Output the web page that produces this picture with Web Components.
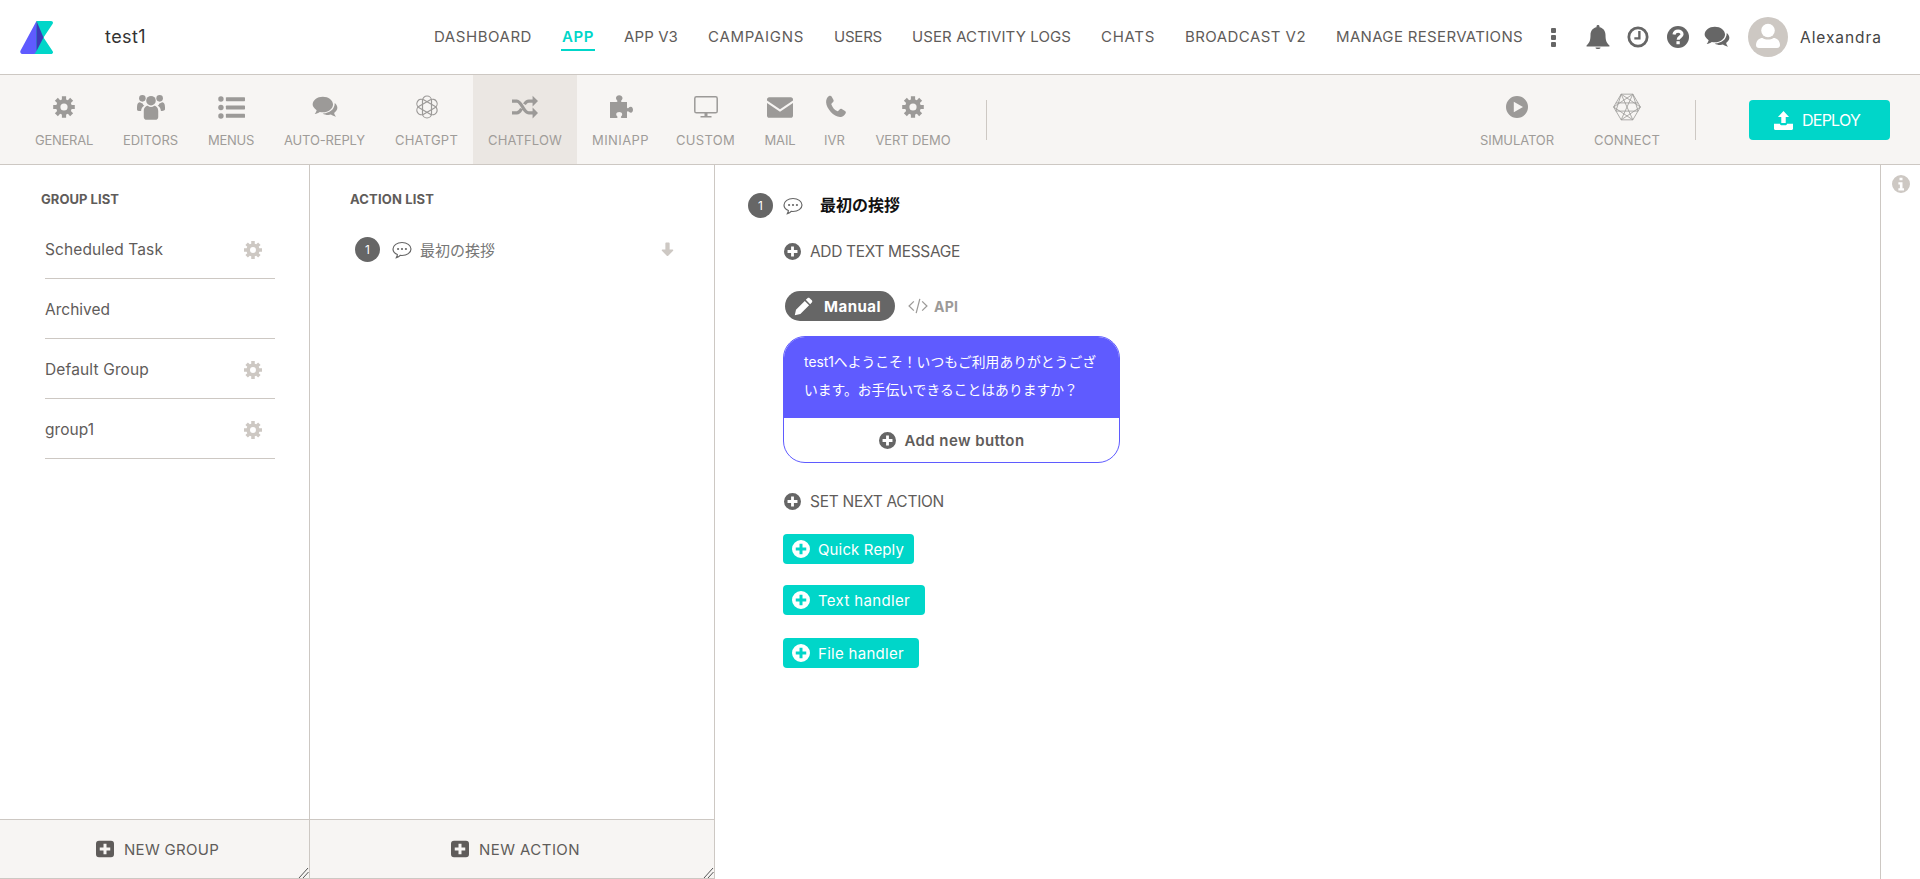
<!DOCTYPE html>
<html><head><meta charset="utf-8"><style>
html,body{margin:0;padding:0;background:#fff;height:879px;overflow:hidden}
body{font-family:Inter,"Noto Sans CJK JP",sans-serif;color:#5f5c5a}
</style></head><body>
<app-shell>
  <app-header>
    <top-link w="98">DASHBOARD</top-link><top-link w="32" active>APP</top-link><top-link w="54">APP V3</top-link><top-link w="96">CAMPAIGNS</top-link><top-link w="48">USERS</top-link><top-link w="159">USER ACTIVITY LOGS</top-link><top-link w="54">CHATS</top-link><top-link w="121">BROADCAST V2</top-link><top-link w="187">MANAGE RESERVATIONS</top-link>
  </app-header>
  <app-toolbar>
    <tool-item w="88" lw="58" icon="gear" label="GENERAL"></tool-item>
    <tool-item w="85" lw="55" icon="users" label="EDITORS"></tool-item>
    <tool-item w="76" lw="46" icon="list" label="MENUS"></tool-item>
    <tool-item w="111" lw="81" icon="comments" label="AUTO-REPLY"></tool-item>
    <tool-item w="93" lw="63" icon="gpt" label="CHATGPT"></tool-item>
    <tool-item w="104" lw="74" icon="shuffle" label="CHATFLOW" active></tool-item>
    <tool-item w="87" lw="57" icon="puzzle" label="MINIAPP"></tool-item>
    <tool-item w="83" lw="59" icon="desktop" label="CUSTOM"></tool-item>
    <tool-item w="66" lw="31" icon="mail" label="MAIL"></tool-item>
    <tool-item w="43" lw="21" icon="phone" label="IVR"></tool-item>
    <tool-item w="114" lw="75" icon="gear" label="VERT DEMO"></tool-item>
    <v-sep slot="mid"></v-sep>
    <tool-item slot="right" w="104" lw="74" icon="play" label="SIMULATOR" style="margin-right:10px"></tool-item>
    <tool-item slot="right" w="96" lw="66" icon="hex" label="CONNECT"></tool-item>
    <v-sep slot="right" style="margin:25px 53px 0 20px"></v-sep>
    <deploy-button slot="right">DEPLOY</deploy-button>
  </app-toolbar>
  <side-panel slot="panels" w="310" title="GROUP LIST" tw="78" foot="NEW GROUP" fw="95" pad="41" ftgap="96">
    <group-row w="118" gear>Scheduled Task</group-row>
    <group-row w="65">Archived</group-row>
    <group-row w="104" gear>Default Group</group-row>
    <group-row w="49" gear>group1</group-row>
  </side-panel>
  <side-panel slot="panels" w="405" title="ACTION LIST" tw="84" foot="NEW ACTION" fw="101" pad="40" ftgap="141">
    <action-row>最初の挨拶</action-row>
  </side-panel>
  <flow-detail slot="panels"></flow-detail>
  <info-rail slot="panels"></info-rail>
</app-shell>
<script>
const fit=(el,w,len)=>{if(!el||!w)return;const t=len||el.textContent.length||1;el.style.display='inline-block';el.style.whiteSpace='nowrap';el.style.letterSpacing='0';const c=el.getBoundingClientRect().width;el.style.letterSpacing=((+w-c)/t).toFixed(3)+'px'};
const gearPath=(()=>{let d='';const n=8,c=12;for(let i=0;i<n;i++){const a=i*2*Math.PI/n-Math.PI/2,w=.27;
 const pts=[[a-w,7.900],[a-w*.72,11],[a+w*.72,11],[a+w,7.900]];
 pts.forEach((p,j)=>{const x=c+p[1]*Math.cos(p[0]),y=c+p[1]*Math.sin(p[0]);d+=(i==0&&j==0?'M':'L')+x.toFixed(2)+' '+y.toFixed(2)})}
 return d+'Z M12 8.400a3.600 3.600 0 1 0 0 7.200a3.600 3.600 0 1 0 0-7.200Z'})();
const chat=`<path d="M10 2.500c5.200 0 9.400 3.200 9.400 7.200s-4.200 7.200-9.400 7.200c-1 0-1.900-.1-2.800-.3-1.400 1-2.900 1.600-4.700 1.900.8-1 1.500-2.100 1.800-3.500C2 13.200.6 11.500.6 9.700.6 5.700 4.800 2.500 10 2.500z"/><path d="M21 8.400c1.500 1.200 2.400 2.700 2.400 4.400 0 1.900-1.200 3.600-3 4.700.3 1.300.9 2.400 1.800 3.500-1.800-.3-3.400-1-4.700-2-.8.200-1.700.3-2.500.3-2 0-3.800-.5-5.200-1.400 5.700.2 11.300-3.300 11.200-9.500z"/>`;
const I={
gear:`<path fill-rule="evenodd" d="${gearPath}"/>`,
users:`<circle cx="12" cy="6.600" r="4.100"/><circle cx="4.600" cy="4.600" r="2.800"/><circle cx="19.400" cy="4.600" r="2.800"/><path d="M5.800 15.500c0-3.400 2.200-4.600 3.400-4.600 1 .7 1.800 1 2.800 1s1.800-.3 2.800-1c1.200 0 3.400 1.200 3.400 4.600v5c0 1.500-1 2.500-2.500 2.500H8.300c-1.500 0-2.500-1-2.500-2.500z"/><path d="M0 12c0-2.800 1.300-4 2.500-4 .8.600 1.500.9 2.300.9.300.9.900 1.600 1.500 2.100-1.600.7-2.700 2.400-2.800 4.500H1.500C.5 15.500 0 14.800 0 14zM24 12c0-2.800-1.300-4-2.500-4-.8.600-1.500.9-2.300.9-.3.900-.9 1.600-1.500 2.100 1.600.7 2.700 2.400 2.800 4.500h1c1 0 2.500-.7 2.500-1.500z"/>`,
list:`<circle cx="2.600" cy="4.500" r="2.400"/><circle cx="2.600" cy="12" r="2.400"/><circle cx="2.600" cy="19.500" r="2.400"/><rect x="7" y="2.800" width="17" height="3.600" rx=".6"/><rect x="7" y="10.200" width="17" height="3.600" rx=".6"/><rect x="7" y="17.600" width="17" height="3.600" rx=".6"/>`,
comments:chat,
gpt:`<g fill="none" stroke="currentColor" stroke-width="1.200"><rect x="7.500" y="1" width="9" height="22" rx="4.500"/><rect x="7.500" y="1" width="9" height="22" rx="4.500" transform="rotate(60 12 12)"/><rect x="7.500" y="1" width="9" height="22" rx="4.500" transform="rotate(120 12 12)"/></g>`,
shuffle:`<path fill="none" stroke="currentColor" stroke-width="3" d="M0 6.500h4.500c4.500 0 6 11 11 11H20M0 17.500h4.500c2 0 3.200-1.800 4.300-3.800M11.500 9.500C12.500 7.800 13.600 6.500 15.500 6.500H20"/><path d="M19 1.500l5 5-5 5zM19 12.500l5 5-5 5z"/>`,
puzzle:`<path d="M1 7h6.500c1 0 1.200-.7.700-1.400C7.500 4.700 7 4 7 3c0-1.700 1.500-2.800 3.200-2.800S13.500 1.300 13.500 3c0 1-.5 1.700-1.200 2.600-.5.700-.3 1.400.7 1.400H18v5.300c0 1 .7 1.200 1.400.7.800-.7 1.500-1.200 2.400-1.200 1.500 0 2.200 1.500 2.200 3s-.7 3-2.200 3c-.9 0-1.600-.5-2.400-1.200-.7-.5-1.400-.3-1.400.7V23h-5.200c-1 0-1.200-.7-.7-1.400.7-.8 1.100-1.500 1.100-2.300 0-1.500-1.500-2.300-3-2.300s-3 .8-3 2.300c0 .8.400 1.500 1.100 2.300.5.700.3 1.400-.7 1.400H1z"/>`,
desktop:`<g fill="none" stroke="currentColor" stroke-width="1.500"><rect x=".8" y="1.800" width="22.400" height="16" rx="1.600"/></g><path d="M10.500 18h3v3h-3zM6.500 21h11v1.400h-11z"/>`,
mail:`<path d="M2 3h20c1.100 0 2 .9 2 2v.9L12 14 0 5.900V5c0-1.100.9-2 2-2z"/><path d="M0 8.200 12 16.400 24 8.200V20c0 1.100-.9 2-2 2H2c-1.100 0-2-.9-2-2z"/>`,
phone:`<path d="M6 1c1-.6 2-.5 2.600.5l1.800 3.300c.4.800.3 1.500-.3 2.100L8.600 8.500c-.3.300-.3.700-.2 1 1.100 3 3 5.200 5.700 6.600.4.200.8.100 1-.2l1.500-1.500c.6-.6 1.500-.7 2.200-.3l3.200 1.900c1 .6 1.100 1.700.5 2.600-1 1.600-2.400 3-4.400 3.300C11.600 23 3.400 13.800 3.100 7.300 3 4.400 4.200 2.300 6 1z"/>`,
play:`<path fill-rule="evenodd" d="M12 1a11 11 0 1 0 0 22a11 11 0 1 0 0-22ZM8.800 6.800 18 12 8.800 17.200Z"/>`,
hex:`<g fill="none" stroke="currentColor" stroke-width=".7"><path d="M7 1h10l6.500 11L17 23H7L.5 12z"/><path d="M7 1 23.500 12M17 1 .5 12M.5 12 17 23M23.500 12 7 23M7 1l10 22M17 1 7 23M2.500 8.500h19M2.500 15.500h19M7 1 2.500 15.500M17 1l4.500 14.500"/></g>`,
upload:`<path d="M12 0l7 7.500h-4.200V15H9.200V7.500H5z"/><path d="M0 16h7.500c.3 1.200 1.300 2 2.500 2h4c1.200 0 2.200-.8 2.500-2H24v6.500c0 .8-.7 1.500-1.500 1.500h-21C.7 24 0 23.300 0 22.500z"/>`,
bell:`<path d="M12 0c.9 0 1.500.6 1.500 1.400v.9c3.700.7 6 3.700 6 7.700 0 6 1.200 7.900 3.900 10.500.3.300.2 1-.4 1H1c-.6 0-.7-.7-.4-1C3.300 17.900 4.500 16 4.500 10c0-4 2.300-7 6-7.700v-.9C10.500.6 11.100 0 12 0z"/><path d="M9.500 22.400h5c0 1-1.200 1.600-2.500 1.600s-2.500-.6-2.500-1.600z"/>`,
clock:`<circle cx="12" cy="12" r="10" fill="none" stroke="currentColor" stroke-width="3"/><path fill="none" stroke="currentColor" stroke-width="2.600" d="M13.500 5.500V13.500H8"/>`,
question:`<circle cx="12" cy="12" r="12"/><path fill="none" stroke="#fff" stroke-width="3.400" d="M7.600 9.300c.4-2.400 2.200-3.700 4.500-3.700 2.400 0 4.300 1.400 4.300 3.400 0 3-4.200 2.800-4.200 6"/><rect x="10.300" y="16.600" width="3.600" height="3.300" fill="#fff"/>`,
chatdark:chat,
plusc:`<path fill-rule="evenodd" d="M12 0a12 12 0 1 0 0 24a12 12 0 1 0 0-24ZM10 5h4v5h5v4h-5v5h-4v-5H5v-4h5Z"/>`,
pluss:`<path fill-rule="evenodd" d="M4 1h16a4 4 0 0 1 4 4v14a4 4 0 0 1-4 4H4a4 4 0 0 1-4-4V5a4 4 0 0 1 4-4ZM10 5v5H5v4h5v5h4v-5h5v-4h-5V5Z"/>`,
info:`<path fill-rule="evenodd" d="M12 0a12 12 0 1 0 0 24a12 12 0 1 0 0-24ZM10 3.500h4v3.500h-4ZM8.500 9.500H14v8h2v3H8.500v-3h2v-5h-2Z"/>`,
down:`<path d="M10 2h4c.6 0 1 .4 1 1v9h4.200c.9 0 1.300 1 .7 1.700L12.700 21c-.4.400-1 .4-1.400 0L4.100 13.700c-.6-.7-.2-1.700.7-1.700H9V3c0-.6.4-1 1-1z"/>`,
bubble:`<g fill="none" stroke="currentColor" stroke-width="1.400"><path d="M12 3c5.900 0 10.800 3.400 10.800 7.800S17.900 18.600 12 18.600c-.8 0-1.500-.1-2.200-.2-1.100 1.400-2.700 2.300-4.500 2.800.7-1.200 1.100-2.300 1.100-3.700C3.300 16.100 1.200 13.600 1.200 10.800 1.200 6.400 6.100 3 12 3z"/></g><circle cx="7.300" cy="10.800" r="1.300"/><circle cx="12" cy="10.800" r="1.300"/><circle cx="16.700" cy="10.800" r="1.300"/>`,
pencil:`<path d="M17 1.500c.8-.8 2-.8 2.800 0l2.700 2.700c.8.800.8 2 0 2.800l-2.100 2.100-5.500-5.500zM13.600 4.900l5.500 5.500L8 21.500l-7 1.500 1.500-7z"/>`,
code:`<path fill="none" stroke="currentColor" stroke-width="1.500" d="M7 6.500 1.300 12 7 17.500M17 6.500 22.700 12 17 17.500M14.200 3.500 9.800 20.500"/>`
};
const def=(n,fn)=>customElements.define(n,class extends HTMLElement{constructor(){super();this.attachShadow({mode:'open'})}connectedCallback(){if(!this.done){this.done=1;fn.call(this,this.shadowRoot)}}});
const svg=(n,s,st='')=>`<svg viewBox="0 0 24 24" width="${s}" height="${s}" fill="currentColor" style="display:block;flex:none;${st}">${I[n]}</svg>`;

def('app-shell',function(r){r.innerHTML=`<style>:host{display:flex;flex-direction:column;height:879px;width:1920px}
.main{display:flex;flex:1;min-height:0}</style><slot></slot><div class="main"><slot name="panels"></slot></div>`});

def('app-header',function(r){r.innerHTML=`<style>:host{display:flex;align-items:center;height:74px;border-bottom:1px solid #cdc8c3;flex:none;background:#fff;color:#5f5c5a}
.logo{margin-left:20px;flex:none}
.name{margin-left:52px;font-size:18px;line-height:22px;color:#333;width:41px;flex:none}
nav{display:flex;gap:30px;margin-left:288px;align-items:center;flex:none}
.ic{display:flex;align-items:center;color:#666;flex:none}
.who{font-size:15.500px;color:#444;margin-left:12px;flex:none}
.av{width:40px;height:40px;border-radius:50%;background:#cdc8c3;overflow:hidden;flex:none;margin-left:18px}
</style>
<svg class="logo" width="33" height="33" viewBox="0 0 33 33"><path d="M16.500 0h14.500c1.600 0 2.400 1.500 1.700 2.700L23.500 16.500 32.700 30.300c.8 1.200 0 2.700-1.700 2.700H14z" fill="#00d6c9"/><path d="M16.500 0 .6 29.500C-.4 31.300 1 33 3 33h11.500L16.500 30z" fill="#5f5bff"/><path d="M16.500 0 23.500 16.500 16.500 30z" fill="#3f38b8"/></svg>
<div class="name"><span id="n">test1</span></div><nav><slot></slot></nav>
<div class="ic" style="margin-left:26px;width:8px;flex-direction:column;gap:2px">${[0,1,2].map(()=>'<span style="width:5px;height:5px;background:#666;border-radius:1px;display:block"></span>').join('')}</div>
<div class="ic" style="margin-left:29px">${svg('bell',24)}</div>
<div class="ic" style="margin-left:17px">${svg('clock',22)}</div>
<div class="ic" style="margin-left:18px">${svg('question',22)}</div>
<div class="ic" style="margin-left:15px">${svg('chatdark',26)}</div>
<div class="av"><svg viewBox="0 0 40 40" width="40" height="40" fill="#fff" style="display:block"><circle cx="20" cy="13.500" r="6.800"/><path d="M8 28c0-4.500 3.500-7 6.500-7 1.500 1 3.500 1.500 5.500 1.500s4-.5 5.500-1.500c3 0 6.500 2.500 6.500 7 0 1.800-1.200 3-3 3H11c-1.800 0-3-1.200-3-3z"/></svg></div>
<div class="who"><span id="w">Alexandra</span></div>`;fit(r.getElementById('n'),41);fit(r.getElementById('w'),82)});

def('top-link',function(r){const a=this.hasAttribute('active');r.innerHTML=`<style>:host{display:block;flex:none;position:relative;width:${this.getAttribute('w')}px;white-space:nowrap;font-size:15px;line-height:20px;color:${a?'#00d6c9':'#5f5c5a'};font-weight:${a?600:400}}
${a?'i{position:absolute;left:-1px;right:-1px;top:22px;height:2px;background:#00d6c9;display:block}':''}</style><span id="t"><slot></slot></span>${a?'<i></i>':''}`;
 fit(r.getElementById('t'),this.getAttribute('w'),this.textContent.length)});

def('app-toolbar',function(r){r.innerHTML=`<style>:host{display:flex;height:89px;border-bottom:1px solid #cdc8c3;background:#f7f5f3;padding-left:20px;flex:none;align-items:stretch}
.r{display:flex;margin-left:auto;padding-right:30px;align-items:stretch}</style><slot></slot><slot name="mid"></slot><div class="r"><slot name="right"></slot></div>`});

def('tool-item',function(r){const a=this.hasAttribute('active'),ic=this.getAttribute('icon');
 const size={desktop:24,users:28,hex:28,gpt:24,mail:26,shuffle:26,puzzle:24,list:27,comments:26}[ic]||24;
 r.innerHTML=`<style>:host{display:flex;flex-direction:column;align-items:center;flex:none;width:${this.getAttribute('w')}px;background:${a?'#ebe7e3':'transparent'};color:#9c9a98}
.i{height:26px;margin-top:19px;display:flex;align-items:center;justify-content:center}
.l{margin-top:11px;font-size:13px;line-height:18px;white-space:nowrap;color:#9f9c99}</style>
<div class="i">${svg(ic,size)}</div><div class="l"><span id="l">${this.getAttribute('label')}</span></div>`;fit(r.getElementById('l'),this.getAttribute('lw'))});

def('v-sep',function(r){r.innerHTML=`<style>:host{display:block;width:1px;height:40px;background:#cdc8c3;margin:25px 0 0 16px;flex:none;align-self:flex-start}</style>`});

def('deploy-button',function(r){r.innerHTML=`<style>:host{display:flex;align-items:center;box-sizing:border-box;padding-left:25px;gap:9px;width:141px;height:40px;margin-top:25px;background:#00d6c9;color:#fff;border-radius:4px;font-size:16px;flex:none;align-self:flex-start}</style>${svg('upload',19)}<span id="t"><slot></slot></span>`;fit(r.getElementById('t'),58,6)});

def('side-panel',function(r){const w=+this.getAttribute('w'),pad=this.getAttribute('pad');r.innerHTML=`<style>:host{display:flex;flex-direction:column;flex:none;width:${w}px;box-sizing:border-box;border-right:1px solid #cdc8c3;height:714px}
h3{margin:0;padding:27px 0 0 ${pad}px;font-size:13px;line-height:14px;font-weight:700;color:#5f5c5a;flex:none}
.b{flex:1;min-height:0;padding-top:1px}
.f{height:58px;border-top:1px solid #cdc8c3;border-bottom:1px solid #cdc8c3;background:#f7f5f3;display:flex;align-items:center;padding-left:${this.getAttribute('ftgap')}px;gap:10px;font-size:15px;color:#5f5c5a;position:relative;flex:none}
.rz{position:absolute;right:0;bottom:0}</style>
<h3><span id="t">${this.getAttribute('title')}</span></h3><div class="b"><slot></slot></div>
<div class="f">${svg('pluss',18)}<span id="o">${this.getAttribute('foot')}</span>
<svg class="rz" width="11" height="11" viewBox="0 0 11 11" fill="none" stroke="#555" stroke-width="1"><path d="M10 1 1 11M10.500 5 5 11"/></svg></div>`;
 fit(r.getElementById('t'),this.getAttribute('tw'));fit(r.getElementById('o'),this.getAttribute('fw'))});

def('group-row',function(r){r.innerHTML=`<style>:host{display:flex;align-items:center;justify-content:space-between;box-sizing:border-box;height:60px;padding:2px 12px 0 0;margin:0 34px 0 45px;border-bottom:1px solid #cdc8c3;font-size:15.500px;color:#5f5c5a}
svg{color:#cdc8c3}</style><span id="t"><slot></slot></span>${this.hasAttribute('gear')?svg('gear',20):''}`;
 fit(r.getElementById('t'),this.getAttribute('w'),this.textContent.length);
 if(!this.previousElementSibling)this.style.marginTop='12px'});

def('num-badge',function(r){r.innerHTML=`<style>:host{display:flex;align-items:center;justify-content:center;width:25px;height:25px;border-radius:50%;background:#666;color:#fff;font-size:12px;flex:none}</style><slot></slot>`});

def('action-row',function(r){r.innerHTML=`<style>:host{display:flex;align-items:center;height:25px;margin:30px 38px 0 45px;font-size:15px;color:#777}
svg{color:#666}.d{margin-left:auto;color:#cdc8c3}span{margin-left:8px;font-family:"Noto Sans CJK JP",sans-serif;font-size:15px;font-weight:400}</style><num-badge>1</num-badge><div style="margin-left:12px">${svg('bubble',20)}</div><span><slot></slot></span><div class="d">${svg('down',17,'color:#cdc8c3')}</div>`});

def('add-row',function(r){r.innerHTML=`<style>:host{display:flex;align-items:center;height:20px;margin-left:36px;font-size:15.500px;color:#5f5c5a;gap:9px}svg{color:#666}</style>${svg('plusc',17)}<span id="t"><slot></slot></span>`;
 fit(r.getElementById('t'),this.getAttribute('w'),this.textContent.length)});

def('teal-button',function(r){r.innerHTML=`<style>:host{display:flex;align-items:center;box-sizing:border-box;height:30px;margin-left:35px;background:#00d6c9;color:#fff;border-radius:4px;font-size:15px;padding-left:9px;gap:8px;width:${this.getAttribute('w')}px}</style>${svg('plusc',18)}<span id="t"><slot></slot></span>`;
 fit(r.getElementById('t'),this.getAttribute('tw'),this.textContent.length)});

def('msg-bubble',function(r){r.innerHTML=`<style>:host{display:block;width:337px;box-sizing:border-box;height:127px;margin:15px 0 0 35px;border:1px solid #5f5bff;border-radius:22px;overflow:hidden;background:#fff}
.t{background:#5f5bff;color:#fff;font-size:13.800px;line-height:28px;padding:11px 0 0 20px;box-sizing:border-box;height:81px;white-space:nowrap}
.a{display:flex;align-items:center;justify-content:center;gap:9px;height:44px;font-size:15px;font-weight:600;color:#5f5c5a}svg{color:#666}</style>
<div class="t"><slot></slot></div><div class="a">${svg('plusc',17)}<span id="a">Add new button</span></div>`;fit(r.getElementById('a'),120)});

def('flow-detail',function(r){r.innerHTML=`<style>:host{display:block;flex:1;min-width:0;padding:28px 0 0 33px;box-sizing:border-box}
.h{display:flex;align-items:center;height:25px}.h svg{color:#666}
.title{margin:-4px 0 0 17px;font:700 16px/22px "Noto Sans CJK JP",sans-serif;color:#111}
.p{display:flex;align-items:center;margin:30px 0 0 37px;height:30px}
.m{display:flex;align-items:center;width:110px;height:30px;border-radius:15px;background:#666;color:#fff;font-weight:700;font-size:15px;box-sizing:border-box;padding-left:9px;gap:11px}
.api{display:flex;align-items:center;margin-left:13px;gap:6px;color:#9c9a98;font-weight:700;font-size:14px}
.jp{font-family:Inter,"Noto Sans CJK JP",sans-serif}</style>
<div class="h"><num-badge>1</num-badge><div style="margin-left:10px">${svg('bubble',20)}</div><div class="title">最初の挨拶</div></div>
<add-row w="150" style="margin-top:23px">ADD TEXT MESSAGE</add-row>
<div class="p"><div class="m">${svg('pencil',19)}<span id="m">Manual</span></div><div class="api">${svg('code',20)}<span id="a">API</span></div></div>
<msg-bubble><span class="jp">test1へようこそ！いつもご利用ありがとうござ<br>います。お手伝いできることはありますか？</span></msg-bubble>
<add-row w="134" style="margin-top:28px">SET NEXT ACTION</add-row>
<teal-button w="131" tw="86" style="margin-top:23px">Quick Reply</teal-button>
<teal-button w="142" tw="92" style="margin-top:21px">Text handler</teal-button>
<teal-button w="136" tw="86" style="margin-top:23px">File handler</teal-button>`;fit(r.getElementById('m'),57);fit(r.getElementById('a'),24)});

def('info-rail',function(r){r.innerHTML=`<style>:host{display:block;flex:none;width:40px;box-sizing:border-box;border-left:1px solid #cdc8c3;padding:10px 0 0 11px;color:#cdc8c3}</style>${svg('info',18)}`});
</script>
</body></html>
